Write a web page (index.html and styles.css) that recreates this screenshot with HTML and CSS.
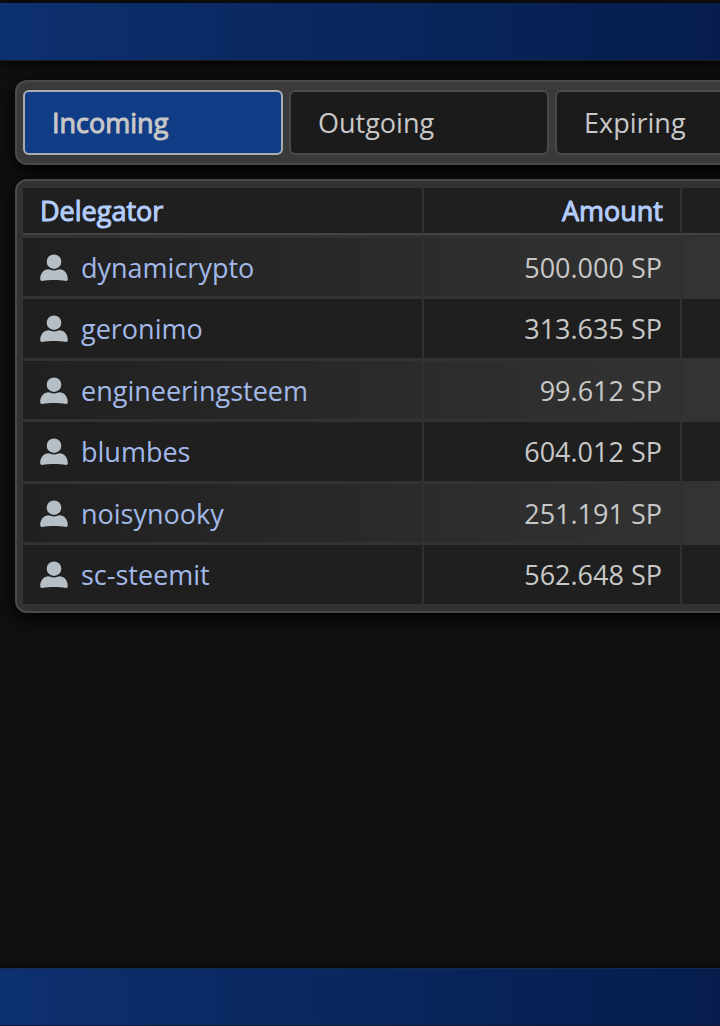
FILE: index.html
```html
<!DOCTYPE html>
<html lang="en">
<head>
<meta charset="utf-8">
<meta name="viewport" content="width=device-width, initial-scale=1">
<title>Delegations</title>
<link rel="stylesheet" href="styles.css">
</head>
<body>
<svg class="sprite" aria-hidden="true"><symbol id="user" viewBox="0 0 28 28"><circle cx="14" cy="7.7" r="7.3"/><path d="M0.2 25.2C0.2 20 3 16 8 15.3C9.6 15.2 11 16.4 14 16.4S18.4 15.2 20 15.3C25 16 27.8 20 27.8 25.2Q27.8 27 26 27C22 26.1 18 25.9 14 25.9S6 26.1 2 27Q0.2 27 0.2 25.2Z"/></symbol></svg>
<header class="bar bar-top"></header>
<main class="content">
  <nav class="panel tabs">
    <button class="tab active" type="button">Incoming</button>
    <button class="tab" type="button">Outgoing</button>
    <button class="tab" type="button">Expiring</button>
  </nav>
  <section class="panel list">
    <table class="delegations">
      <colgroup><col class="col-name"><col class="col-amount"><col></colgroup>
      <thead><tr><th scope="col">Delegator</th><th scope="col" class="amount">Amount</th><td></td></tr></thead>
      <tbody>
        <tr><td><a class="user" href="#"><svg class="icon" aria-hidden="true"><use href="#user"/></svg>dynamicrypto</a></td><td class="amount">500.000 SP</td><td></td></tr>
        <tr><td><a class="user" href="#"><svg class="icon" aria-hidden="true"><use href="#user"/></svg>geronimo</a></td><td class="amount">313.635 SP</td><td></td></tr>
        <tr><td><a class="user" href="#"><svg class="icon" aria-hidden="true"><use href="#user"/></svg>engineeringsteem</a></td><td class="amount">99.612 SP</td><td></td></tr>
        <tr><td><a class="user" href="#"><svg class="icon" aria-hidden="true"><use href="#user"/></svg>blumbes</a></td><td class="amount">604.012 SP</td><td></td></tr>
        <tr><td><a class="user" href="#"><svg class="icon" aria-hidden="true"><use href="#user"/></svg>noisynooky</a></td><td class="amount">251.191 SP</td><td></td></tr>
        <tr><td><a class="user" href="#"><svg class="icon" aria-hidden="true"><use href="#user"/></svg>sc-steemit</a></td><td class="amount">562.648 SP</td><td></td></tr>
      </tbody>
    </table>
  </section>
</main>
<footer class="bar bar-bottom"></footer>
</body>
</html>
```
FILE: styles.css
```css
* { box-sizing: border-box; }

body {
  margin: 0;
  min-height: 100vh;
  display: flex;
  flex-direction: column;
  overflow: hidden;
  background: #101010;
  color: #c8c8c8;
  font: 27px/38px "Open Sans", "Noto Sans", sans-serif;
}

.sprite { display: none; }

.bar {
  height: 58px;
  flex: none;
  background: linear-gradient(to right, #0d306f, #061d4d);
}

.bar-top {
  margin-top: 3px;
  border-bottom: 1px solid #1c1c1c;
  box-shadow: 0 2px 12px #000;
}

.bar-bottom {
  border-top: 1px solid #142b50;
  border-bottom: 1px solid #101c33;
  box-shadow: 0 0 4px #000;
}

/* Panels run past the right edge of a narrow window. */
.content {
  flex: 1;
  margin: 19px -103px 0 15px;
}

.panel {
  border: 2px solid #4a4a4a;
  border-radius: 12px;
  box-shadow: 0 5px 18px #000;
}

.tabs {
  display: grid;
  grid-template-columns: repeat(3, 1fr);
  gap: 6px;
  padding: 8px 6px;
  background: #3a3a3a;
}

.tab {
  padding: 12px 27px 11px;
  border: 2px solid #4a4a4a;
  border-radius: 6px;
  background: #1b1b1b;
  color: inherit;
  font: inherit;
  text-align: left;
}

.active {
  border-color: #a9adb3;
  background: #113d86;
  -webkit-text-stroke: 1px currentColor;
}

.list {
  margin-top: 14px;
  padding: 7px 6px;
  background: #323232;
}

.delegations {
  width: 100%;
  table-layout: fixed;
  border-collapse: separate;
  border-spacing: 0;
  background: #1f1f1f;
}

.col-name { width: 401px; }
.col-amount { width: 258px; }

th, td {
  padding: 11px 18px 9px 17px;
  border-right: 2px solid #303030;
  text-align: left;
}

thead th, thead td {
  padding: 4px 17px 3px;
  border-bottom: 2px solid #444;
}

th {
  color: #b4cdfd;
  font-weight: 400;
  -webkit-text-stroke: 1px currentColor;
}

.amount { text-align: right; }

tbody td { border-top: 3px solid #323232; }

tbody tr:nth-child(odd) {
  background: linear-gradient(to right, #202020, #343434 90%);
}

tbody tr:nth-child(even) td { padding-bottom: 10px; }

.user {
  display: flex;
  align-items: center;
  gap: 13px;
  color: #a2b9e8;
  text-decoration: none;
}

.icon {
  width: 28px;
  height: 28px;
  flex: none;
  fill: #b6bec6;
}
```
